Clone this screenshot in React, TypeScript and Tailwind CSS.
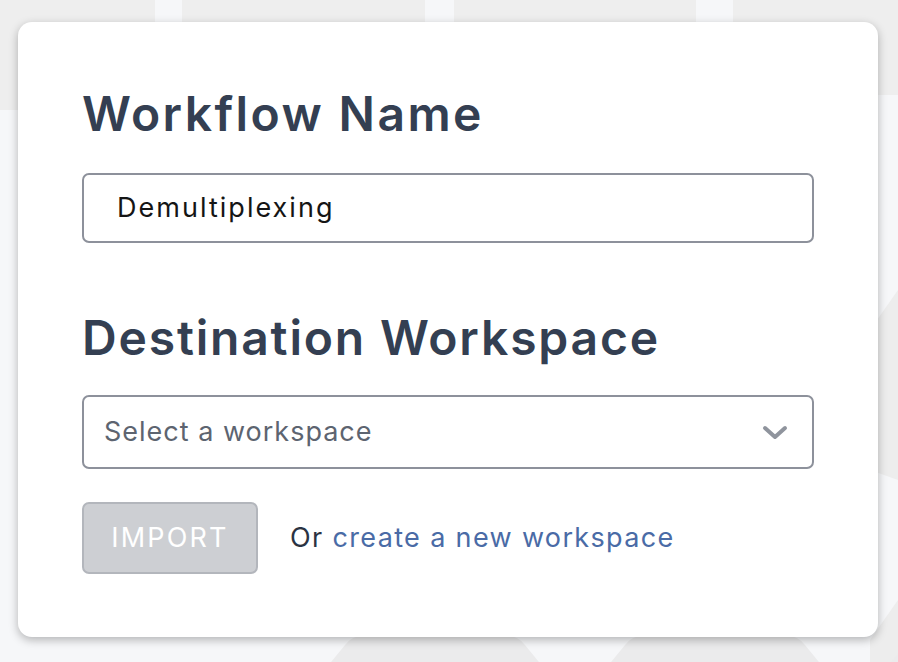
import React from "react";

function Background() {
  return (
    <svg
      className="absolute inset-0 h-full w-full"
      viewBox="0 0 898 662"
      preserveAspectRatio="none"
      aria-hidden="true"
    >
      <rect x="0" y="0" width="898" height="662" fill="#f6f7f9" />
      <polygon points="0,0 155,0 155,70 120,110 0,110" fill="#eeeeee" />
      <polygon points="182,0 425,0 425,70 182,70" fill="#eeeeee" />
      <polygon points="454,0 696,0 696,70 454,70" fill="#eeeeee" />
      <polygon points="733,0 898,0 898,95 733,95" fill="#eeeeee" />
      <polygon points="870,330 898,290 898,480 870,470" fill="#ededed" />
      <polygon points="870,640 898,600 898,662 870,662" fill="#ededed" />
      <path d="M300,700 L345,645 Q352,636 362,636 L508,636 Q518,636 525,645 L570,700 Z" fill="#ebebec" />
      <path d="M580,700 L625,645 Q632,636 642,636 L788,636 Q798,636 805,645 L850,700 Z" fill="#ebebec" />
      <path d="M860,700 L905,645 Q912,636 922,636 L1000,636 L1000,700 Z" fill="#ebebec" />
    </svg>
  );
}

export default function App() {
  return (
    <div
      className="relative h-[662px] w-[898px] overflow-hidden"
      style={{ fontFamily: "Inter, 'Noto Sans', sans-serif" }}
    >
      <Background />
      <div className="relative pl-[18px] pt-[22px]">
        <div className="w-[860px] h-[615px] rounded-[14px] bg-white px-[64px] pt-[68px] shadow-[0_3px_10px_rgba(0,0,0,0.28)]">
          <h1 className="text-[48px] leading-[48px] font-semibold tracking-[0.05em] text-[#343f52]">
            Workflow Name
          </h1>
          <div className="mt-[35px] flex h-[70px] w-[732px] items-center rounded-[7px] border-2 border-[#8d919b] pl-[33px]">
            <span className="text-[27px] tracking-[0.075em] text-[#151515]">Demultiplexing</span>
          </div>
          <h2 className="mt-[71px] text-[48px] leading-[48px] font-semibold tracking-[0.038em] text-[#343f52]">
            Destination Workspace
          </h2>
          <div className="mt-[33px] flex h-[74px] w-[732px] items-center justify-between rounded-[7px] border-2 border-[#8d919b] pl-[20px] pr-[24px]">
            <span className="text-[27px] tracking-[0.037em] text-[#5d6470]">Select a workspace</span>
            <svg width="26" height="15" viewBox="0 0 26 15" aria-hidden="true">
              <path
                d="M3 3 L13 12 L23 3"
                fill="none"
                stroke="#8f949d"
                strokeWidth="4"
                strokeLinecap="round"
                strokeLinejoin="round"
              />
            </svg>
          </div>
          <div className="mt-[33px] flex items-center">
            <div className="flex h-[72px] w-[176px] items-center justify-center rounded-[7px] border-2 border-[#b3b6bc] bg-[#cdcfd3]">
              <span className="text-[27px] tracking-[0.08em] text-white">IMPORT</span>
            </div>
            <p className="ml-[32px] text-[27px] tracking-[0.05em] text-[#2b3342]">
              Or <span className="text-[#4a6ba6]">create a new workspace</span>
            </p>
          </div>
        </div>
      </div>
    </div>
  );
}
